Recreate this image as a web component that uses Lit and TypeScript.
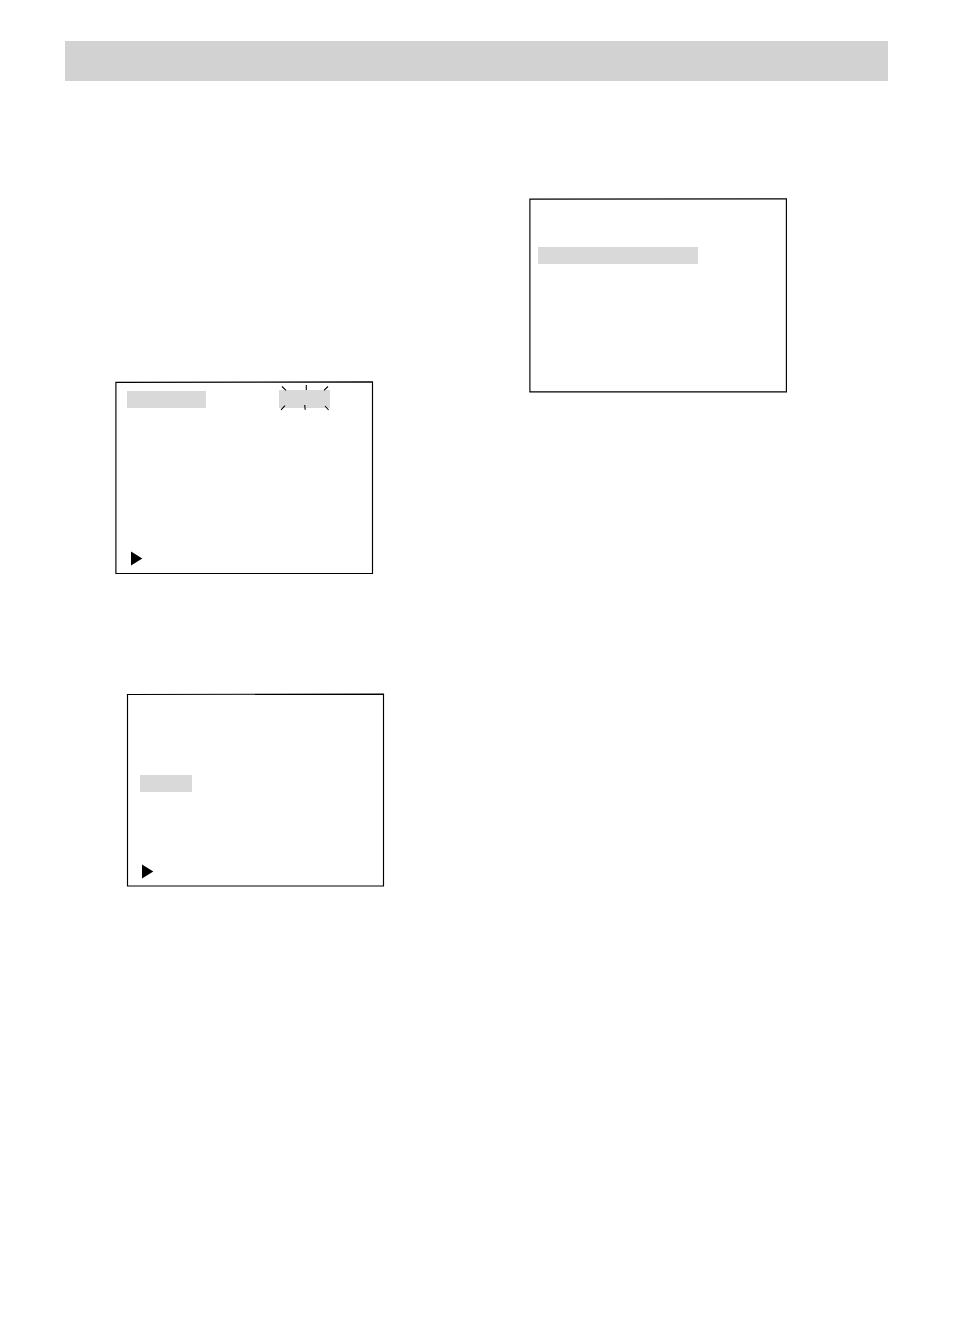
import { LitElement, html, css, svg } from "lit";
import { customElement } from "lit/decorators.js";

const frame = (height: number, points: string) => svg`
  <svg class="frame" viewBox="0 0 258 ${height}" width="258" height=${height} aria-hidden="true">
    <polygon points=${points} fill="none" stroke="#000" stroke-width="1.15" />
  </svg>`;

const pointer = html`
  <svg class="pointer" viewBox="0 0 12 15" width="12" height="15" aria-hidden="true">
    <path d="M0 0.5 L11.3 7.5 L0 14.5 Z" />
  </svg>`;

@customElement("app-root")
export class AppRoot extends LitElement {
  static styles = css`
    :host {
      display: block;
      min-height: 100vh;
      box-sizing: border-box;
      padding: 41px 66px 40px 65px;
      background: #fff;
      font-family: "Liberation Sans", sans-serif;
    }
    .banner {
      height: 40px;
      background: #d2d2d2;
    }
    .columns {
      display: grid;
      grid-template-columns: 1fr 1fr;
      column-gap: 17px;
    }
    .left {
      display: flex;
      flex-direction: column;
      gap: 120px;
      padding: 300px 0 0 50px;
    }
    .right {
      padding: 117px 0 0 44px;
    }
    .screen {
      display: grid;
      width: 258px;
    }
    .indented {
      margin-left: 12px;
    }
    .frame,
    .content {
      grid-area: 1 / 1;
    }
    .frame {
      display: block;
      overflow: visible;
    }
    .content {
      display: flex;
      flex-direction: column;
      justify-content: space-between;
      align-items: flex-start;
    }
    .live {
      padding: 9px 43px 8px 12px;
    }
    .menu {
      padding: 81px 13px 8px 13px;
    }
    .list {
      padding: 49px 9px;
    }
    .row {
      display: flex;
      align-self: stretch;
      justify-content: space-between;
      align-items: flex-end;
    }
    .mark {
      height: 17px;
      background: #d9d9d9;
    }
    .short {
      width: 52px;
    }
    .medium {
      width: 79px;
    }
    .long {
      width: 160px;
    }
    .flash {
      display: block;
      overflow: visible;
    }
    .pointer {
      display: block;
      margin-left: 4px;
    }
    .menu .pointer {
      margin-left: 2px;
    }
  `;

  render() {
    return html`
      <header class="banner"></header>
      <main class="columns">
        <section class="left">
          <div class="screen">
            ${frame(193, "0.9,1.4 257.5,0.9 257.5,192.5 0.9,192.5")}
            <div class="content live">
              <div class="row">
                <div class="mark medium"></div>
                <svg class="flash" viewBox="0 0 51 18" width="51" height="18" aria-hidden="true">
                  <rect width="51" height="18" fill="#d9d9d9" />
                  <path
                    d="M3 -3.5 L7 0.3 M27.3 -5 V0 M49 -3.5 L45 0.3 M6 15.7 L2 19.8 M25.7 15 L26.2 19.8 M46 16 L49.6 20"
                    fill="none"
                    stroke="#000"
                    stroke-width="1.1"
                  />
                </svg>
              </div>
              ${pointer}
            </div>
          </div>
          <div class="screen indented">
            ${frame(193, "0.5,0.5 256.5,0.1 256.5,192 0.5,192")}
            <div class="content menu">
              <div class="mark short"></div>
              ${pointer}
            </div>
          </div>
        </section>
        <section class="right">
          <div class="screen">
            ${frame(194, "0.9,1.1 257.4,0.8 257.4,193.9 0.9,193.9")}
            <div class="content list">
              <div class="mark long"></div>
            </div>
          </div>
        </section>
      </main>
    `;
  }
}
